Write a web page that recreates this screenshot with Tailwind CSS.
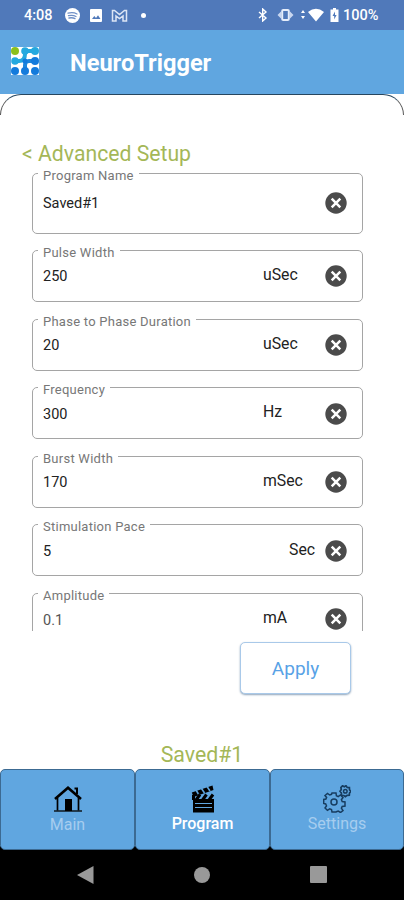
<!DOCTYPE html>
<html lang="en">
<head>
<meta charset="utf-8">
<title>NeuroTrigger</title>
<script src="https://cdn.jsdelivr.net/npm/@tailwindcss/browser@4"></script>
</head>
<body class="w-[404px] h-[900px] overflow-hidden bg-white font-[Roboto,sans-serif]">
<svg class="hidden">
  <symbol id="clear" viewBox="0 0 22 22"><circle cx="11" cy="11" r="10.7" fill="#4b4b4b"/><path d="M6.700 6.700l8.600 8.600M15.300 6.700l-8.600 8.600" stroke="#fff" stroke-width="2.500"/></symbol>
</svg>
<div class="flex flex-col h-full">
  <header class="h-[30px] shrink-0 bg-[#5079ba] flex items-center text-white text-[14.5px] font-medium">
    <span class="ml-6 w-[41px] leading-[30px] pt-[2px]">4:08</span>
    <svg class="w-[15px] h-[15px]" viewBox="0 0 15 15"><circle cx="7.5" cy="7.5" r="7.5" fill="#fff"/><path d="M3 5.200q5-1.500 9 .8M3.500 7.700q4.300-1 7.500.8M4 10q3.500-.7 6 .6" fill="none" stroke="#6f8fc6" stroke-width="1.300" stroke-linecap="round"/></svg>
    <svg class="ml-[10px] w-[12px] h-[13px]" viewBox="0 0 12 13"><rect width="12" height="13" rx="1" fill="#fff"/><path d="M2 10l2.300-3 1.700 2 2-2.800 2.500 3.800z" fill="#5079ba"/></svg>
    <svg class="ml-[9px] w-[17px] h-[13px]" viewBox="0 0 17 13"><path d="M1.500 12V1.500h2l5 4 5-4h2V12h-3.500V7L8.500 9.500 5 7v5z" fill="none" stroke="#dce5f5" stroke-width="1.500"/></svg>
    <span class="ml-[13px] w-[5px] h-[5px] rounded-full bg-white"></span>
    <svg class="ml-[112px] w-[10px] h-[14px]" viewBox="0 0 10 14"><path d="M1 4l7 6-3.300 3V1L8 4 1 10" fill="none" stroke="#fff" stroke-width="1.400"/></svg>
    <svg class="ml-[9px] w-[17px] h-[14px]" viewBox="0 0 17 14"><rect x="5.200" y="2" width="6.600" height="10" rx="1" fill="none" stroke="#e5edfa" stroke-width="2"/><path d="M4 3.500L.5 7 4 10.500zM13 3.500L16.500 7 13 10.500z" fill="#c8d6f0"/></svg>
    <svg class="ml-[7px] w-[23px] h-[14px]" viewBox="0 0 23 14"><path d="M0 5l2-3 2 3zM0 8l2 3 2-3zM7 4q8-6.500 16 0l-8 9.500z" fill="#fff"/></svg>
    <svg class="ml-[6px] w-[9px] h-[14px]" viewBox="0 0 9 14"><path d="M3 0h3v1.500h2.500V14H.5V1.500H3z" fill="#fff"/><path d="M5 3.500L2.500 8h1.700v3.500L6.600 7H5z" fill="#5079ba"/></svg>
    <span class="ml-[4px] leading-[30px] pt-[1px] text-[14.500px]">100%</span>
  </header>
  <div class="h-[64px] shrink-0 bg-[#60a6e0] flex items-center">
    <svg class="ml-[11px] mt-[-2px] w-[28px] h-[28px]" viewBox="0 0 28 28"><rect width="28" height="28" fill="#fff"/>
      <g stroke-width="4" fill="none"><path d="M4 14h4q6 0 6-7V4M14 4h10" stroke="#25a9df"/><path d="M24 14h-6q-4 0-4 4v6M4 24h0" stroke="#1d86dc"/></g>
      <circle cx="4" cy="4" r="4" fill="#8cc01c"/><g fill="#25a9df"><circle cx="14" cy="4" r="3.800"/><circle cx="24" cy="4" r="4"/><circle cx="4" cy="14" r="3.800"/></g><g fill="#147bdc"><circle cx="14" cy="14" r="2.500"/><circle cx="24" cy="14" r="4"/><circle cx="4" cy="24" r="4"/><circle cx="14" cy="24" r="4"/><circle cx="24" cy="24" r="4"/></g></svg>
    <h1 class="ml-[31px] mt-[3px] text-white font-bold text-[23.600px]">NeuroTrigger</h1>
  </div>
  <main class="h-[674.500px] shrink-0 relative flex flex-col">
    <div class="absolute inset-x-0 top-0 h-[21px] rounded-t-[21px] border-t-[1.500px] border-x border-t-[#27465f] border-x-[#555]"></div>
    <h2 class="ml-[22px] mt-[47px] h-[25px] leading-[26px] text-[21.200px] text-[#a4b757]">&lt; Advanced Setup</h2>
    <div class="h-[465px] overflow-hidden pl-[32px] text-[14.500px] text-[#222]">
      <div class="h-[77px]"><fieldset class="w-[331px] h-[68px] border border-[#a5a5a5] rounded-[5px]"><legend class="ml-[5px] px-[5px] h-[15px] pt-[4px] leading-[12px] text-[13px] tracking-[.25px] text-[#777]">Program Name</legend><div class="h-[44px] flex items-center pl-[10px] pr-[15px]"><span class="pt-[2px]">Saved#1</span><svg class="ml-auto w-[22px] h-[22px]"><use href="#clear"/></svg></div></fieldset></div>
      <div class="h-[68.600px]"><fieldset class="w-[331px] h-[59px] border border-[#a5a5a5] rounded-[5px]"><legend class="ml-[5px] px-[5px] h-[15px] pt-[4px] leading-[12px] text-[13px] tracking-[.25px] text-[#777]">Pulse Width</legend><div class="h-[36px] flex items-center pl-[10px] pr-[15px]"><span class="w-[220px] pt-[2px]">250</span><span class="mb-[3px] text-[15.800px]">uSec</span><svg class="ml-auto w-[22px] h-[22px]"><use href="#clear"/></svg></div></fieldset></div>
      <div class="h-[68.600px]"><fieldset class="w-[331px] h-[59px] border border-[#a5a5a5] rounded-[5px]"><legend class="ml-[5px] px-[5px] h-[15px] pt-[4px] leading-[12px] text-[13px] tracking-[.25px] text-[#777]">Phase to Phase Duration</legend><div class="h-[37px] flex items-center pl-[10px] pr-[15px]"><span class="w-[220px] pt-[2px]">20</span><span class="mb-[3px] text-[15.800px]">uSec</span><svg class="ml-auto w-[22px] h-[22px]"><use href="#clear"/></svg></div></fieldset></div>
      <div class="h-[68.600px]"><fieldset class="w-[331px] h-[59px] border border-[#a5a5a5] rounded-[5px]"><legend class="ml-[5px] px-[5px] h-[15px] pt-[4px] leading-[12px] text-[13px] tracking-[.25px] text-[#777]">Frequency</legend><div class="h-[37px] flex items-center pl-[10px] pr-[15px]"><span class="w-[220px] pt-[2px]">300</span><span class="mb-[3px] text-[15.800px]">Hz</span><svg class="ml-auto w-[22px] h-[22px]"><use href="#clear"/></svg></div></fieldset></div>
      <div class="h-[68.600px]"><fieldset class="w-[331px] h-[59px] border border-[#a5a5a5] rounded-[5px]"><legend class="ml-[5px] px-[5px] h-[15px] pt-[4px] leading-[12px] text-[13px] tracking-[.25px] text-[#777]">Burst Width</legend><div class="h-[37px] flex items-center pl-[10px] pr-[15px]"><span class="w-[220px] pt-[2px]">170</span><span class="mb-[3px] text-[15.800px]">mSec</span><svg class="ml-auto w-[22px] h-[22px]"><use href="#clear"/></svg></div></fieldset></div>
      <div class="h-[68.600px]"><fieldset class="w-[331px] h-[59px] border border-[#a5a5a5] rounded-[5px]"><legend class="ml-[5px] px-[5px] h-[15px] pt-[4px] leading-[12px] text-[13px] tracking-[.25px] text-[#777]">Stimulation Pace</legend><div class="h-[37px] flex items-center pl-[10px] pr-[15px]"><span class="w-[246px] pt-[2px]">5</span><span class="mb-[3px] text-[15.800px]">Sec</span><svg class="ml-auto w-[22px] h-[22px]"><use href="#clear"/></svg></div></fieldset></div>
      <div class="h-[68.600px]"><fieldset class="w-[331px] h-[59px] border border-[#a5a5a5] rounded-[5px]"><legend class="ml-[5px] px-[5px] h-[15px] pt-[4px] leading-[12px] text-[13px] tracking-[.25px] text-[#777]">Amplitude</legend><div class="h-[37px] flex items-center pl-[10px] pr-[15px]"><span class="w-[220px] pt-[2px] text-[#555]">0.1</span><span class="mb-[3px] text-[15.800px]">mA</span><svg class="ml-auto w-[22px] h-[22px]"><use href="#clear"/></svg></div></fieldset></div>
    </div>
    <button class="ml-[240px] mt-[11px] w-[111px] h-[52px] shrink-0 rounded-[5px] border-[1.500px] border-[#a9c9e9] bg-white shadow-[0_1px_2px_#8fa5bb] text-[19px] text-[#58a2e6] pt-[2px]">Apply</button>
    <div class="mt-[48px] h-[26px] leading-[26px] text-center text-[21.300px] text-[#a4b757]">Saved#1</div>
  </main>
  <nav class="h-[81px] shrink-0 grid grid-cols-[135px_135px_134px] text-[16px] text-[#a6cdef] bg-linear-to-b from-white from-95% to-black to-95%">
    <div class="bg-[#60a6e0] border border-[#3c6a92] rounded-[5px] flex flex-col items-center pt-[16px]">
      <svg class="w-[28px] h-[26px]" viewBox="0 0 28 26" fill="none" stroke="#000"><path d="M1 13L14 1.800 27 13" stroke-width="2.600"/><path d="M20.500 2.500h2.500V8" stroke-width="2"/><path d="M3.500 12v12.500M24.500 12v12.500" stroke-width="1.700"/><path d="M0 25h28" stroke-width="1.300"/><path d="M11 13h7v12h-7z" fill="#000" stroke="none"/></svg>
      <span class="leading-[24px] mt-[1px]">Main</span>
    </div>
    <div class="bg-[#60a6e0] border border-[#3c6a92] rounded-[5px] flex flex-col items-center pt-[15px] text-white font-medium">
      <svg class="w-[24px] h-[28px]" viewBox="0 0 24 28"><path d="M2 14h21v13.500H2z"/><path d="M.8 7.500L21.500.5l1 4.500L2.500 12z"/><path d="M5 5l3 5M10.500 3.500l3 4.500M16 1.500l3 4.500" stroke="#60a6e0" stroke-width="1.600"/><path d="M2.500 10v5M9 9.500L5 15M15.500 9.500l-4 5.500M22 9.500L18 15" stroke="#000" stroke-width="3"/><path d="M4 18.500h17M4 22.500h17" stroke="#60a6e0" stroke-width="1.100"/></svg>
      <span class="leading-[24px] mt-[-1px]">Program</span>
    </div>
    <div class="bg-[#60a6e0] border border-[#3c6a92] rounded-[5px] flex flex-col items-center pt-[15px]">
      <svg class="w-[28px] h-[28px]" viewBox="0 0 28 28" fill="none" stroke="#173d60" stroke-width="1.500"><path d="M9 8h4l.4 2.800 1.800.8L17.500 10l2.500 2.500-1.600 2.200.8 1.900 2.800.4v4l-2.800.4-.8 1.800 1.600 2.300-2.500 2-2.300-1.500-1.800.8L13 27H9l-.5-2.400-1.800-.8-2.300 1.500L2 23l1.500-2.200-.8-1.800L.7 18.500v-4l2.200-.4.7-1.700L2 10.500 4.500 8.500 6.700 10l1.800-.7z"/><circle cx="11" cy="17" r="3"/><path d="M19.500.8l1.800 1L23 .7l1.200 1.700 2.200.2.100 2.200 1.300 1.500-1.300 1.700-.2 2.200-2.200.2-1.700 1.300-1.600-1.200-2.300-.2-.1-2.200L17 6.300l1.300-1.800-.4-2z" stroke-width="1.700"/><circle cx="22.300" cy="6.200" r="1.800"/></svg>
      <span class="leading-[24px] mt-[-1px]">Settings</span>
    </div>
  </nav>
  <footer class="grow bg-black flex items-center justify-between pl-[77px] pr-[77px]">
    <svg class="w-[17px] h-[18px]" viewBox="0 0 17 18"><path d="M0 9L16.500 0v18z" fill="#999"/></svg>
    <span class="w-[16px] h-[16px] rounded-full bg-[#999]"></span>
    <span class="w-[17px] h-[17px] rounded-[1px] bg-[#999]"></span>
  </footer>
</div>
</body>
</html>
